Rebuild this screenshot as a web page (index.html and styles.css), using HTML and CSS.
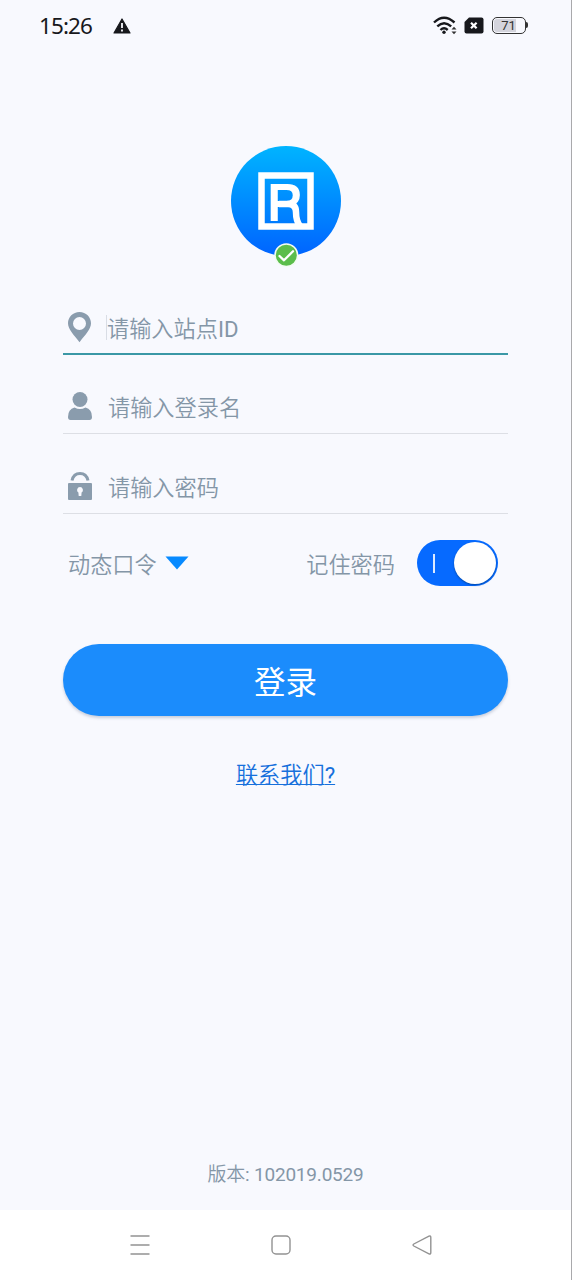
FILE: index.html
```html
<!DOCTYPE html>
<html lang="zh-CN">
<head>
<meta charset="utf-8">
<title>登录</title>
<link rel="stylesheet" href="styles.css">
</head>
<body>
<div class="screen">
  <header class="status">
    <span class="clock">15:26</span>
    <svg class="warn" width="18" height="16" viewBox="0 0 18 16"><path d="M9 1 17 15H1Z" fill="#17181c" stroke="#17181c" stroke-width="1.2" stroke-linejoin="round"/><path d="M9 5v5M9 11.500v2" stroke="#f8f9fe" stroke-width="1.800"/></svg>
    <svg class="wifi" width="24" height="19" viewBox="0 0 24 19" fill="none" stroke="#17181c" stroke-width="2.4"><path d="M1 6.500Q11 -3 21.500 6.500M4.300 10.300Q11 4 18.200 10.300M7.500 14Q11 10.700 14.700 14"/><circle cx="11" cy="16.300" r="1.700" fill="#17181c" stroke="none"/><path d="M18.500 13.500 21 10.700 23.500 13.500ZM18.500 15.500 21 18.300 23.500 15.500Z" fill="#333" stroke="none"/></svg>
    <svg class="sim" width="20" height="17" viewBox="0 0 20 17"><path d="M5 .5H17.500Q19.500 .5 19.500 2.500V14.500Q19.500 16.500 17.500 16.500H2.500Q.5 16.500 .5 14.500V5Z" fill="#17181c"/><path d="m7 5.700 5.600 5.600m0-5.600L7 11.300" stroke="#fff" stroke-width="2.200"/></svg>
    <span class="battery"><span>71</span></span>
  </header>

  <main class="content">
    <div class="logo">
      <svg width="110" height="122" viewBox="0 0 110 122">
        <defs>
          <linearGradient id="sky" x1="0" y1="0" x2="0" y2="1"><stop offset="0" stop-color="#00b4ff"/><stop offset="1" stop-color="#0064ff"/></linearGradient>
          <clipPath id="upper"><path d="M34 30H76V60H48V78H34Z"/></clipPath>
        </defs>
        <circle cx="55" cy="55" r="55" fill="url(#sky)"/>
        <rect x="30.500" y="29.500" width="49" height="51" fill="none" stroke="#fff" stroke-width="6.500"/>
        <text class="mark" x="36.500" y="75" textLength="35" lengthAdjust="spacingAndGlyphs" clip-path="url(#upper)">R</text>
        <path d="M48 58H57Q65 58 65 66Q65 75 69 80" fill="none" stroke="#fff" stroke-width="6.500"/>
        <circle cx="55.300" cy="109.300" r="11.300" fill="#5bbd4b" stroke="#f3fbf3" stroke-width="1.500"/>
        <path d="m48.500 110 4.500 4.300 9-9" fill="none" stroke="#fff" stroke-width="2.300" stroke-linecap="round" stroke-linejoin="round"/>
      </svg>
    </div>

    <form class="form">
      <label class="field active">
        <svg width="34" height="32" viewBox="0 0 34 32"><path fill-rule="evenodd" d="M16.500 1C10 1 5 6 5 12.300 5 18.500 11 24 16.500 31.300 22 24 28 18.500 28 12.300 28 6 23 1 16.500 1ZM16.500 6a6.500 6.500 0 1 1 0 13 6.500 6.500 0 0 1 0-13Z" fill="#8a9cad"/></svg>
        <span class="caret"></span><span class="hint">请输入站点<span class="latin">ID</span></span>
      </label>
      <label class="field login-name">
        <svg width="34" height="32" viewBox="0 0 34 32" fill="#8a9cad"><circle cx="17" cy="9.500" r="7.500"/><path d="M5 27Q5 19 11.500 17.500Q17 20.500 22.500 17.500Q29 19 29 27Q29 30 26.500 30H7.500Q5 30 5 27Z"/></svg>
        <span class="hint">请输入登录名</span>
      </label>
      <label class="field">
        <svg width="34" height="32" viewBox="0 0 34 32"><path d="M9 10.500C10 6 13 3.500 17 3.500S24 6 25 10.500" fill="none" stroke="#8a9cad" stroke-width="3"/><rect x="5" y="13" width="24" height="17" rx="1" fill="#8a9cad"/><path d="M17 17a3 3 0 0 1 1.600 5.500L18.300 26H15.700L15.400 22.500A3 3 0 0 1 17 17Z" fill="#f8f9fe"/></svg>
        <span class="hint">请输入密码</span>
      </label>

      <div class="options">
        <span class="token">动态口令</span>
        <svg class="arrow" width="24" height="14" viewBox="0 0 24 14"><path d="M.5 .5H23.500L12 13.500Z" fill="#078aff"/></svg>
        <span class="remember">记住密码</span>
        <span class="switch"><i class="tick"></i><i class="knob"></i></span>
      </div>

      <button class="login" type="button">登录</button>
    </form>
    <a class="contact">联系我们<span class="latin">?</span></a>
    <p class="version">版本<span class="latin">: 102019.0529</span></p>
  </main>

  <nav class="nav">
    <svg width="20" height="22" viewBox="0 0 20 22"><path d="M.5 2H19.500M.5 11H19.500M.5 20H19.500"/></svg>
    <svg width="20" height="22" viewBox="0 0 20 22"><rect x="1" y="2" width="18" height="18" rx="4"/></svg>
    <svg width="20" height="22" viewBox="0 0 20 22"><path d="M17 2.200 1.800 10Q.3 11 1.800 12L17 19.800Q18.800 20.500 18.800 18.500V3.500Q18.800 1.500 17 2.200Z"/></svg>
  </nav>
</div>
</body>
</html>
```
FILE: styles.css
```css
* { box-sizing: border-box; }
body { margin: 0; }
svg { display: block; flex: none; }
.screen {
  width: 572px;
  height: 1280px;
  display: flex;
  flex-direction: column;
  background: #f8f9fe;
  border-right: 1px solid #a9a9ac;
  font-family: Roboto, "Noto Sans CJK SC", sans-serif;
  color: #8496a7;
}
.status {
  height: 52px;
  display: flex;
  align-items: center;
  padding: 0 45px 0 39px;
  color: #17181c;
}
.clock { font: 22.5px/50px "Noto Sans", sans-serif; letter-spacing: -0.9px; width: 74px; }
.warn, .wifi, .sim, .battery { margin-bottom: 1px; }
.wifi { margin-left: auto; }
.sim { margin-left: 7px; }
.battery {
  position: relative;
  width: 34px;
  height: 17px;
  margin-left: 8px;
  padding: 1px;
  border: 1.5px solid #333;
  border-radius: 5px;
  font: 13px/13px Roboto, sans-serif;
  text-align: center;
  color: #333;
}
.battery span { display: block; width: 22px; height: 13px; border-radius: 3px 0 0 3px; background: #d4d4dc; text-indent: 7px; }
.battery::after { content: ""; position: absolute; right: -3px; top: 4px; width: 2px; height: 6px; background: #333; border-radius: 0 2px 2px 0; }
.content {
  flex: 1;
  display: flex;
  flex-direction: column;
  align-items: center;
  padding-top: 94px;
}
.logo { height: 122px; }
.mark { font: bold 53px "Liberation Sans", sans-serif; fill: #fff; }
.form { width: 445px; margin-top: 34px; }
.latin { font-weight: 400; }
.field {
  height: 80px;
  display: flex;
  align-items: flex-end;
  padding-bottom: 11px;
  border-bottom: 1.5px solid #dddfe5;
}
.login-name { height: 79px; }
.field.active { height: 53px; padding-bottom: 10px; border-bottom: 2px solid #3b98a6; }
.hint { font-size: 22.2px; line-height: 28px; font-weight: 350; margin-left: 11px; }
.caret { width: 1px; height: 25px; margin: 0 0 3px 9px; background: #d9dde5; }
.caret + .hint { margin-left: 0; }
.options {
  height: 46px;
  display: flex;
  align-items: center;
  margin-top: 26px;
  padding: 0 10px 0 5px;
  font-size: 22.2px;
  font-weight: 350;
}
.token, .remember { line-height: 32px; margin-top: 4px; }
.arrow { margin-left: 8px; }
.remember { margin-left: auto; }
.switch {
  width: 81px;
  height: 46px;
  display: flex;
  align-items: center;
  margin-left: 22px;
  padding: 0 2px 0 16px;
  border-radius: 23px;
  background: #066aff;
}
.tick { width: 1.5px; height: 19px; background: #dceaff; }
.knob { width: 42px; height: 42px; margin-left: auto; border-radius: 50%; background: #fff; box-shadow: 0 1px 2px #0048a8; }
.login {
  display: block;
  width: 445px;
  height: 72px;
  margin-top: 58px;
  padding: 7px 0 0;
  border: 0;
  border-radius: 36px;
  background: #1b8cfc;
  box-shadow: 0 2px 3px rgba(60, 80, 120, .25);
  color: #fff;
  font: 400 31.5px/65px Roboto, "Noto Sans CJK SC", sans-serif;
}
.contact {
  margin-top: 43px;
  font-size: 22.2px;
  line-height: 32px;
  font-weight: 350;
  color: #1670dc;
  text-decoration: underline;
  text-decoration-thickness: 1px;
}
.version { margin: auto 0 20px; font-size: 19px; letter-spacing: -0.2px; line-height: 30px; font-weight: 350; }
.nav {
  height: 70px;
  display: flex;
  align-items: center;
  gap: 121px;
  padding-left: 130px;
  background: #fff;
  fill: none;
  stroke: #929292;
  stroke-width: 1.4;
}
```
